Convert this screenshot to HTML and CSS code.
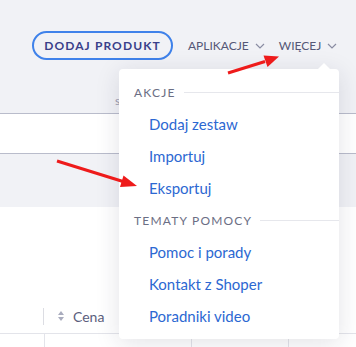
FILE: index.html
```html
<!DOCTYPE html>
<html lang="pl">
<head>
<meta charset="utf-8">
<link rel="stylesheet" href="styles.css">
</head>
<body>
<div class="page">
  <header class="head">
    <div class="topbar">
      <button class="btn-add">DODAJ PRODUKT</button>
      <a class="nav-link">APLIKACJE <svg class="chev" viewBox="0 0 10 6" width="10" height="6"><path d="M1 1l4 4 4-4" fill="none" stroke="currentColor" stroke-width="1.2"/></svg></a>
      <a class="nav-link">WIĘCEJ <svg class="chev" viewBox="0 0 10 6" width="10" height="6"><path d="M1 1l4 4 4-4" fill="none" stroke="currentColor" stroke-width="1.2"/></svg></a>
    </div>
    <div class="peek">s</div>
  </header>
  <div class="search"></div>
  <div class="band"></div>
  <div class="table">
    <div class="thead">
      <div class="th th-first"></div>
      <div class="th th-price">
        <span class="sort"><i class="up"></i><i class="down"></i></span>
        <span>Cena</span>
      </div>
    </div>
    <div class="tbody">
      <div class="td c1"></div>
      <div class="td c2"></div>
      <div class="td c3"></div>
      <div class="td c4"></div>
    </div>
  </div>

  <nav class="menu">
    <div class="menu-head"><span>AKCJE</span></div>
    <a class="menu-item">Dodaj zestaw</a>
    <a class="menu-item">Importuj</a>
    <a class="menu-item">Eksportuj</a>
    <div class="menu-head"><span>TEMATY POMOCY</span></div>
    <a class="menu-item">Pomoc i porady</a>
    <a class="menu-item">Kontakt z Shoper</a>
    <a class="menu-item">Poradniki video</a>
  </nav>

  <svg class="arrows" width="356" height="347" viewBox="0 0 356 347">
    <line x1="228" y1="73" x2="265" y2="61.5" stroke="#ee1b1b" stroke-width="3"/>
    <polygon points="279,56.5 267.5,67 263.5,55.5" fill="#ee1b1b"/>
    <line x1="57" y1="161" x2="123" y2="181.5" stroke="#ee1b1b" stroke-width="3"/>
    <polygon points="137,186 120,187 123.5,175.5" fill="#ee1b1b"/>
  </svg>
</div>
</body>
</html>
```
FILE: styles.css
```css
* { box-sizing: border-box; }
html, body { margin: 0; padding: 0; }
body {
  font-family: Lato, "Liberation Sans", sans-serif;
  background: #fff;
}
.page {
  position: relative;
  width: 356px;
  height: 347px;
  overflow: hidden;
  background: #fff;
}
.head {
  height: 113px;
  background: #f1f2f6;
  position: relative;
}
.topbar {
  display: flex;
  align-items: center;
  padding: 31px 0 0 32px;
}
.btn-add {
  height: 29px;
  width: 141px;
  border: 2px solid #3f82ea;
  border-radius: 15px;
  background: transparent;
  font-family: inherit;
  font-weight: 700;
  font-size: 12px;
  letter-spacing: 1.1px;
  color: #39408a;
  padding: 0;
}
.nav-link {
  display: flex;
  align-items: center;
  gap: 6px;
  font-size: 12px;
  font-weight: 400;
  color: #555877;
  margin-left: 15px;
  white-space: nowrap;
}
.nav-link + .nav-link { margin-left: 14px; }
.chev { color: #8a8da3; }
.peek {
  position: absolute;
  left: 115px;
  top: 93px;
  font-size: 12px;
  color: #9a9db0;
}
.search {
  height: 41px;
  background: #fff;
  border-top: 1px solid #b9bccb;
  border-bottom: 1px solid #b9bccb;
}
.band {
  height: 53px;
  background: #f1f2f6;
}
.table {
  background: #fff;
  padding-top: 92px;
}
.thead {
  display: flex;
  align-items: center;
  height: 35px;
  border-bottom: 1px solid #e3e4ea;
}
.th-first { width: 43px; }
.th-price {
  display: flex;
  align-items: center;
  gap: 9px;
  height: 17px;
  border-left: 1px solid #dcdde3;
  padding-left: 14px;
  font-size: 14px;
  color: #5b5e7c;
}
.sort {
  display: flex;
  flex-direction: column;
  gap: 2px;
}
.sort i {
  display: block;
  width: 0;
  height: 0;
  border-left: 3.5px solid transparent;
  border-right: 3.5px solid transparent;
}
.sort .up { border-bottom: 4px solid #a9acbe; }
.sort .down { border-top: 4px solid #a9acbe; }
.tbody {
  display: flex;
  height: 20px;
}
.td { border-left: 1px solid #e3e4ea; }
.c1 { width: 44px; border-left: none; }
.c2 { width: 147px; }
.c3 { width: 97px; }
.c4 { flex: 1; }

.menu {
  position: absolute;
  left: 119px;
  top: 69px;
  width: 220px;
  height: 270px;
  background: #fff;
  border-radius: 4px;
  box-shadow: 0 4px 24px rgba(30, 34, 60, 0.13);
  padding: 7px 0;
  display: flex;
  flex-direction: column;
}
.menu::before {
  content: "";
  position: absolute;
  top: -6px;
  left: 198px;
  border-left: 7px solid transparent;
  border-right: 7px solid transparent;
  border-bottom: 7px solid #fff;
}
.menu-head {
  height: 32px;
  display: flex;
  align-items: center;
  gap: 8px;
  padding-left: 15px;
  font-size: 12px;
  letter-spacing: 1.2px;
  color: #6b6e84;
}
.menu-head::after {
  content: "";
  flex: 1;
  height: 1px;
  background: #e6e7ec;
}
.menu-item {
  height: 32px;
  display: flex;
  align-items: center;
  padding-left: 30px;
  font-size: 15px;
  color: #2c68d2;
}
.arrows {
  position: absolute;
  left: 0;
  top: 0;
  pointer-events: none;
}
```
